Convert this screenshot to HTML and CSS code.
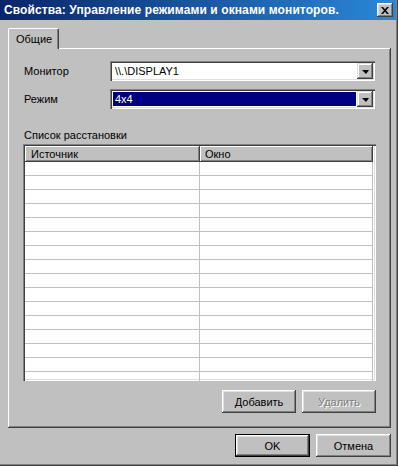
FILE: index.html
```html
<!DOCTYPE html>
<html lang="ru">
<head>
    <meta charset="UTF-8">
    <title>Свойства: Управление режимами и окнами мониторов.</title>
    <link rel="stylesheet" href="styles.css">
</head>
<body>
    <div class="window">
        <div class="titlebar">
            <span class="title">Свойства: Управление режимами и окнами мониторов.</span>
            <span class="close-btn">
                <svg width="8" height="7" viewBox="0 0 8 7"><path d="M0 0h2l2 2.2L6 0h2L5 3.5 8 7H6L4 4.8 2 7H0l3-3.5z" fill="#000"/></svg>
            </span>
        </div>

        <div class="content">
            <div class="tabs">
                <div class="tab">Общие</div>
            </div>

            <div class="panel">
                <div class="field">
                    <label>Монитор</label>
                    <div class="combo">
                        <div class="combo-text">\\.\DISPLAY1</div>
                        <div class="drop-btn"><span class="arrow"></span></div>
                    </div>
                </div>
                <div class="field">
                    <label>Режим</label>
                    <div class="combo">
                        <div class="combo-text"><span class="selected">4x4</span></div>
                        <div class="drop-btn"><span class="arrow"></span></div>
                    </div>
                </div>

                <div class="group-label">Список расстановки</div>
                <div class="listview">
                    <div class="lv-header">
                        <div class="col col-src">Источник</div>
                        <div class="col col-win">Окно</div>
                    </div>
                    <div class="lv-rows">
                        <div class="lv-row"><span></span><span></span></div>
                        <div class="lv-row"><span></span><span></span></div>
                        <div class="lv-row"><span></span><span></span></div>
                        <div class="lv-row"><span></span><span></span></div>
                        <div class="lv-row"><span></span><span></span></div>
                        <div class="lv-row"><span></span><span></span></div>
                        <div class="lv-row"><span></span><span></span></div>
                        <div class="lv-row"><span></span><span></span></div>
                        <div class="lv-row"><span></span><span></span></div>
                        <div class="lv-row"><span></span><span></span></div>
                        <div class="lv-row"><span></span><span></span></div>
                        <div class="lv-row"><span></span><span></span></div>
                        <div class="lv-row"><span></span><span></span></div>
                        <div class="lv-row"><span></span><span></span></div>
                        <div class="lv-row"><span></span><span></span></div>
                        <div class="lv-row"><span></span><span></span></div>
                    </div>
                </div>

                <div class="panel-actions">
                    <button class="btn">Добавить</button>
                    <button class="btn" disabled>Удалить</button>
                </div>
            </div>

            <div class="footer">
                <button class="btn btn-default">OK</button>
                <button class="btn">Отмена</button>
            </div>
        </div>
    </div>
</body>
</html>
```

FILE: styles.css
```css
body { margin: 0; background: #c0c0c0; font-family: "Liberation Sans", Arial, sans-serif; font-size: 11px; color: #000; }

.window {
    width: 398px;
    height: 466px;
    box-sizing: border-box;
    background: #c0c0c0;
    box-shadow: inset -1px -1px #404040, inset -2px -2px #808080;
    display: flex;
    flex-direction: column;
}

.titlebar {
    height: 20px;
    margin-right: 2px;
    display: flex;
    align-items: center;
    justify-content: space-between;
    padding: 0 3px 0 4px;
    background: linear-gradient(to right, #0a246a, #2a88d8);
    color: #fff;
}
.title { font-weight: bold; font-size: 12px; letter-spacing: 0.1px; white-space: nowrap; }
.close-btn {
    width: 16px;
    height: 14px;
    box-sizing: border-box;
    background: #c0c0c0;
    display: flex;
    align-items: center;
    justify-content: center;
    box-shadow: inset -1px -1px #404040, inset 1px 1px #fff, inset -2px -2px #808080, inset 2px 2px #dfdfdf;
}

.content { padding: 8px 7px 0 8px; display: flex; flex-direction: column; }

.tabs { display: flex; height: 20px; }
.tab {
    width: 51px;
    box-sizing: border-box;
    padding: 4px 0 0 7px;
    border-top: 1px solid #fff;
    border-left: 1px solid #fff;
    border-right: 1px solid #404040;
    border-top-left-radius: 2px;
    border-top-right-radius: 2px;
    box-shadow: inset -1px 0 #808080;
    position: relative;
    z-index: 1;
    background: #c0c0c0;
    height: 21px;
}

.panel {
    height: 380px;
    box-sizing: border-box;
    padding: 13px 15px 15px 15px;
    box-shadow: inset -1px -1px #404040, inset 1px 1px #fff, inset -2px -2px #808080;
    display: flex;
    flex-direction: column;
}

.field { display: flex; align-items: center; padding: 0 1px; height: 20px; margin-bottom: 8px; }
.field label { width: 86px; }
.combo {
    flex: 1;
    height: 20px;
    box-sizing: border-box;
    padding: 2px;
    background: #fff;
    display: flex;
    box-shadow: inset 1px 1px #808080, inset 2px 2px #404040, inset -1px -1px #fff, inset -2px -2px #dfdfdf;
}
.combo-text { flex: 1; padding: 1px; display: flex; align-items: center; }
.combo-text .selected {
    flex: 1;
    align-self: stretch;
    display: flex;
    align-items: center;
    padding-left: 2px;
    background: #000080;
    color: #fff;
}
.combo-text:first-child { padding-left: 3px; }
.combo-text:has(.selected) { padding-left: 1px; }
.drop-btn {
    width: 16px;
    height: 16px;
    box-sizing: border-box;
    background: #c0c0c0;
    display: flex;
    align-items: center;
    justify-content: center;
    box-shadow: inset -1px -1px #404040, inset 1px 1px #dfdfdf, inset -2px -2px #808080, inset 2px 2px #fff;
}
.arrow { width: 0; height: 0; border-left: 4px solid transparent; border-right: 3px solid transparent; border-top: 4px solid #000; margin-top: 1px; }

.group-label { margin-top: 12px; height: 15px; padding-left: 1px; }

.listview {
    height: 237px;
    box-sizing: border-box;
    padding: 2px;
    background: #fff;
    box-shadow: inset 1px 1px #808080, inset 2px 2px #404040, inset -1px -1px #fff, inset -2px -2px #dfdfdf;
    overflow: hidden;
}
.lv-header { display: flex; width: 348px; height: 16px; }
.col {
    box-sizing: border-box;
    padding: 2px 0 0 6px;
    background: #c0c0c0;
    box-shadow: inset -1px -1px #404040, inset 1px 1px #fff, inset -2px -2px #808080;
}
.col-src { width: 175px; }
.col-win { width: 173px; padding-left: 5px; }

.lv-row { display: flex; width: 348px; height: 14px; box-sizing: border-box; border-bottom: 1px solid #c0c0c0; }
.lv-row span { box-sizing: border-box; border-right: 1px solid #c0c0c0; }
.lv-row span:first-child { width: 175px; }
.lv-row span:last-child { width: 173px; }

.panel-actions { display: flex; justify-content: flex-end; gap: 6px; margin-top: 9px; }

.btn {
    width: 74px;
    height: 23px;
    padding: 0;
    border: none;
    background: #c0c0c0;
    font-family: inherit;
    font-size: 11px;
    color: #000;
    box-shadow: inset -1px -1px #404040, inset 1px 1px #fff, inset -2px -2px #808080, inset 2px 2px #dfdfdf;
}
.btn:disabled { color: #808080; text-shadow: 1px 1px #fff; }
.btn-default {
    width: 75px;
    box-shadow: inset 0 0 0 1px #000, inset -2px -2px #404040, inset 2px 2px #fff, inset -3px -3px #808080, inset 3px 3px #dfdfdf;
}

.footer { display: flex; justify-content: flex-end; gap: 6px; margin-top: 6px; }
.footer .btn { width: 75px; }
```
